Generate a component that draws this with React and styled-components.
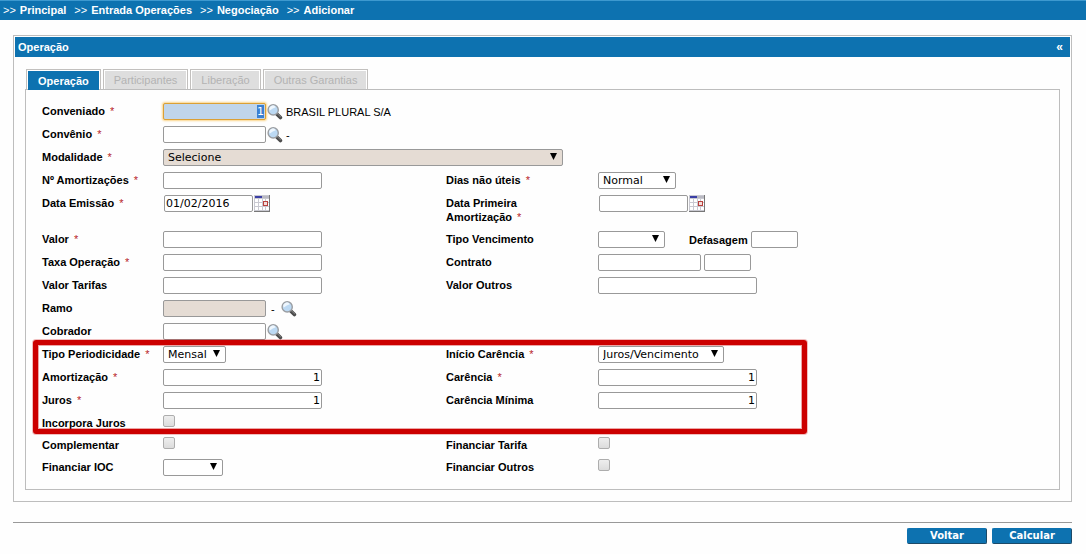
import React, { useEffect, useRef, useState } from 'react'
import styled, { createGlobalStyle } from 'styled-components'

const crumbs = ['Principal', 'Entrada Operações', 'Negociação', 'Adicionar']
const tabs = ['Operação', 'Participantes', 'Liberação', 'Outras Garantias']

const SearchIcon = () => (
  <svg width="16" height="16" viewBox="0 0 16 16" aria-hidden="true">
    <path d="M9.8 10 L13.4 13.6" stroke="#4a4a4a" strokeWidth="3.6" strokeLinecap="round" />
    <path d="M10.2 9.6 L13.6 12.8" stroke="#8a8a8a" strokeWidth="1" strokeLinecap="round" />
    <circle cx="6.2" cy="5.9" r="5.1" fill="#bcd9f3" stroke="#9a9da1" strokeWidth="1.4" />
    <path d="M2.8 6.6 A3.4 3.4 0 0 1 8.8 3.2 Q5.8 4.2 2.8 6.6Z" fill="#eef6fd" />
  </svg>
)

const CalendarIcon = () => (
  <svg width="16" height="17" viewBox="0 0 16 17" shapeRendering="crispEdges" aria-hidden="true">
    <rect width="16" height="17" fill="#777" />
    <rect x="0" y="0" width="15" height="16" fill="#c9c9d1" />
    <rect x="1" y="1" width="14" height="2" fill="#b9b9c2" />
    <rect x="1" y="1" width="7" height="2" fill="#3b3fa5" />
    <path
      d="M1 4h3v3H1zM5 4h3v3H5zM9 4h2v3H9zM12 4h3v3h-3zM1 8h3v3H1zM5 8h3v3H5zM12 8h3v3h-3zM1 12h3v3H1zM5 12h3v3H5zM9 12h2v3H9zM12 12h3v3h-3z"
      fill="#fff"
    />
    <rect x="9" y="6" width="5" height="5" fill="#b8403c" />
    <rect x="10" y="7" width="3" height="3" fill="#f3dcd9" />
  </svg>
)

const Field = ({ id, label, required, children }) => (
  <>
    <Label htmlFor={id}>
      {label}
      {required && <Required> *</Required>}
    </Label>
    <Controls>{children}</Controls>
  </>
)

const Combo = ({ id, width, options = [''], muted }) => (
  <SelectBox $width={width}>
    <Select id={id} $muted={muted}>
      {options.map((option) => (
        <option key={option}>{option}</option>
      ))}
    </Select>
    <Arrow viewBox="0 0 7 7" aria-hidden="true">
      <path d="M0 0h7L3.5 7z" />
    </Arrow>
  </SelectBox>
)

const Search = ({ name }) => (
  <IconButton type="button" aria-label={`Pesquisar ${name}`}>
    <SearchIcon />
  </IconButton>
)

const DateField = ({ id, defaultValue }) => (
  <DateBox>
    <Input id={id} $width={89} defaultValue={defaultValue} />
    <IconButton type="button" aria-label="Calendário">
      <CalendarIcon />
    </IconButton>
  </DateBox>
)

const App = () => {
  const [open, setOpen] = useState(true)
  const first = useRef(null)

  useEffect(() => {
    first.current?.focus()
    first.current?.select()
  }, [])

  return (
    <>
      <GlobalStyle />
      <Breadcrumb>
        {crumbs.map((crumb) => (
          <Crumb key={crumb}>
            &gt;&gt;<a href="#">{crumb}</a>
          </Crumb>
        ))}
      </Breadcrumb>
      <Page>
        <Panel>
          <PanelTitle>
            <h1>Operação</h1>
            <Collapse type="button" aria-label="Recolher" onClick={() => setOpen(!open)}>
              «
            </Collapse>
          </PanelTitle>
          {open && (
            <PanelBody>
              <Tabs role="tablist">
                {tabs.map((tab, i) => (
                  <Tab key={tab} type="button" role="tab" aria-selected={i === 0} disabled={i > 0}>
                    <span>{tab}</span>
                  </Tab>
                ))}
              </Tabs>
              <Form>
                <Row>
                  <Field id="conveniado" label="Conveniado" required>
                    <Input id="conveniado" ref={first} $width={103} $right defaultValue="1" />
                    <Search name="Conveniado" />
                    <Info>BRASIL PLURAL S/A</Info>
                  </Field>
                </Row>
                <Row>
                  <Field id="convenio" label="Convênio" required>
                    <Input id="convenio" $width={103} />
                    <Search name="Convênio" />
                    <Info>-</Info>
                  </Field>
                </Row>
                <Row>
                  <Field id="modalidade" label="Modalidade" required>
                    <Combo id="modalidade" width={400} options={['Selecione']} muted />
                  </Field>
                </Row>
                <Row>
                  <Field id="amortizacoes" label="Nº Amortizações" required>
                    <Input id="amortizacoes" $width={159} />
                  </Field>
                  <Field id="dias" label="Dias não úteis" required>
                    <Combo id="dias" width={78} options={['Normal']} />
                  </Field>
                </Row>
                <Row>
                  <Field id="emissao" label="Data Emissão" required>
                    <DateField id="emissao" defaultValue="01/02/2016" />
                  </Field>
                  <Field id="primeira" label="Data Primeira Amortização" required>
                    <DateField id="primeira" />
                  </Field>
                </Row>
                <Row>
                  <Field id="valor" label="Valor" required>
                    <Input id="valor" $width={159} />
                  </Field>
                  <Field id="vencimento" label="Tipo Vencimento">
                    <Combo id="vencimento" width={67} />
                    <InlineLabel htmlFor="defasagem">Defasagem</InlineLabel>
                    <Input id="defasagem" $width={47} />
                  </Field>
                </Row>
                <Row>
                  <Field id="taxa" label="Taxa Operação" required>
                    <Input id="taxa" $width={159} />
                  </Field>
                  <Field id="contrato" label="Contrato">
                    <Pair>
                      <Input id="contrato" $width={103} />
                      <Input aria-label="Contrato complemento" $width={47} />
                    </Pair>
                  </Field>
                </Row>
                <Row>
                  <Field id="tarifas" label="Valor Tarifas">
                    <Input id="tarifas" $width={159} />
                  </Field>
                  <Field id="outros" label="Valor Outros">
                    <Input id="outros" $width={159} />
                  </Field>
                </Row>
                <Row>
                  <Field id="ramo" label="Ramo">
                    <Input id="ramo" $width={103} $muted readOnly />
                    <Info $wide>-</Info>
                    <Search name="Ramo" />
                  </Field>
                </Row>
                <Row>
                  <Field id="cobrador" label="Cobrador">
                    <Input id="cobrador" $width={103} />
                    <Search name="Cobrador" />
                  </Field>
                </Row>
                <Group>
                  <Row>
                    <Field id="periodicidade" label="Tipo Periodicidade" required>
                      <Combo id="periodicidade" width={63} options={['Mensal']} />
                    </Field>
                    <Field id="inicio" label="Início Carência" required>
                      <Combo id="inicio" width={126} options={['Juros/Vencimento']} />
                    </Field>
                  </Row>
                  <Row>
                    <Field id="amortizacao" label="Amortização" required>
                      <Input id="amortizacao" $width={159} $right defaultValue="1" />
                    </Field>
                    <Field id="carencia" label="Carência" required>
                      <Input id="carencia" $width={159} $right defaultValue="1" />
                    </Field>
                  </Row>
                  <Row>
                    <Field id="juros" label="Juros" required>
                      <Input id="juros" $width={159} $right defaultValue="1" />
                    </Field>
                    <Field id="minima" label="Carência Mínima">
                      <Input id="minima" $width={159} $right defaultValue="1" />
                    </Field>
                  </Row>
                  <Row>
                    <Field id="incorpora" label="Incorpora Juros">
                      <Checkbox id="incorpora" />
                    </Field>
                  </Row>
                  <Highlight />
                </Group>
                <Row>
                  <Field id="complementar" label="Complementar">
                    <Checkbox id="complementar" />
                  </Field>
                  <Field id="finTarifa" label="Financiar Tarifa">
                    <Checkbox id="finTarifa" />
                  </Field>
                </Row>
                <Row>
                  <Field id="ioc" label="Financiar IOC">
                    <Combo id="ioc" width={60} />
                  </Field>
                  <Field id="finOutros" label="Financiar Outros">
                    <Checkbox id="finOutros" />
                  </Field>
                </Row>
              </Form>
            </PanelBody>
          )}
        </Panel>
        <Actions>
          <ActionButton type="button">Voltar</ActionButton>
          <ActionButton type="button">Calcular</ActionButton>
        </Actions>
      </Page>
    </>
  )
}

export default App

const GlobalStyle = createGlobalStyle`
  * {
    box-sizing: border-box;
  }
  body {
    margin: 0;
    background: #fefefe;
    color: #000;
    font-family: "Liberation Sans", Arial, sans-serif;
    font-size: 11px;
    line-height: 14px;
  }
  button, input, select {
    margin: 0;
    font: inherit;
  }
`

const Breadcrumb = styled.nav`
  display: flex;
  align-items: center;
  gap: 8px;
  height: 20px;
  padding: 0 3px;
  background: #0d72b0;
  box-shadow: inset 0 1px #3d99cf;
  color: #fff;
`

const Crumb = styled.span`
  display: flex;
  gap: 4px;
  a {
    color: #fff;
    font-weight: bold;
    text-decoration: none;
  }
`

const Page = styled.main`
  padding: 15px 14px 0 13px;
`

const Panel = styled.section`
  padding: 1px;
  border: 1px solid #bdbdbd;
`

const PanelTitle = styled.header`
  display: flex;
  align-items: center;
  justify-content: space-between;
  height: 20px;
  padding: 0 7px 0 3px;
  background: #0d72b0;
  color: #fff;
  h1 {
    margin: 0;
    font-size: 11px;
  }
`

const Collapse = styled.button`
  padding: 0;
  border: 0;
  background: none;
  color: #fff;
  font-size: 12px;
  font-weight: bold;
  cursor: pointer;
`

const PanelBody = styled.div`
  padding: 12px 10px 10px;
`

const Tabs = styled.div`
  display: flex;
  gap: 2px;
  padding-left: 1px;
`

const Tab = styled.button`
  height: 20px;
  padding: 1px 1px 0;
  border: 1px solid #c2c0be;
  border-bottom: 0;
  background: #fff;
  color: #b3b3b3;
  span {
    display: block;
    height: 18px;
    padding: 2px 9px;
    background: #dedede;
  }
  &[aria-selected='true'] {
    color: #fff;
    font-weight: bold;
    z-index: 1;
    span {
      height: 19px;
      padding: 3px 10px;
      background: #0d72b0;
    }
  }
`

const Form = styled.form`
  display: flex;
  flex-direction: column;
  gap: 6px;
  padding: 13px 16px;
  border: 1px solid #bdbdbd;
`

const Row = styled.div`
  display: grid;
  grid-template-columns: 121px 283px 152px 1fr;
  align-items: start;
`

const Group = styled.div`
  position: relative;
  display: flex;
  flex-direction: column;
  gap: 6px;
`

/* red frame drawn over the periodicity fields */
const Highlight = styled.div`
  position: absolute;
  top: -6px;
  bottom: -3px;
  left: -9px;
  width: 774px;
  border: 5px solid #cc0000;
  border-radius: 3px;
  box-shadow: 0 0 0 1px rgba(204, 0, 0, 0.25), inset 0 0 0 1px rgba(204, 0, 0, 0.35);
  pointer-events: none;
`

const Label = styled.label`
  padding: 1px 30px 1px 0;
  font-weight: bold;
  &:first-child {
    padding-right: 0;
  }
`

const InlineLabel = styled.label`
  width: 62px;
  margin-left: 24px;
  font-weight: bold;
`

const Required = styled.span`
  margin-left: 2px;
  color: #b8242a;
  font-weight: normal;
`

const Controls = styled.div`
  display: flex;
  align-items: center;
`

const Pair = styled.div`
  display: flex;
  gap: 3px;
`

const DateBox = styled.div`
  display: flex;
  gap: 1px;
  padding-left: 1px;
`

const Input = styled.input`
  width: ${(props) => props.$width}px;
  height: 17px;
  padding: 0 1px;
  border: 1px solid #999;
  border-radius: 2px;
  background: ${(props) => (props.$muted ? '#e5dcd4' : '#fff')};
  font-family: 'DejaVu Sans', Verdana, sans-serif;
  text-align: ${(props) => (props.$right ? 'right' : 'left')};
  &:focus {
    outline: 0;
    border-color: #dba035;
    background: #c0d5ea;
    box-shadow: 0 0 2px 1px #fbd58a;
  }
  &::selection {
    background: #3a80d2;
    color: #fff;
  }
`

const SelectBox = styled.div`
  position: relative;
  flex: none;
  width: ${(props) => props.$width}px;
  height: 17px;
`

const Select = styled.select`
  display: block;
  width: 100%;
  height: 17px;
  padding: 0 4px;
  border: 1px solid #999;
  border-radius: 2px;
  appearance: none;
  background: ${(props) => (props.$muted ? '#e5dcd4' : '#fff')};
  color: #000;
  font-family: 'DejaVu Sans', Verdana, sans-serif;
`

const Arrow = styled.svg`
  position: absolute;
  top: 4px;
  right: 6px;
  width: 7px;
  height: 7px;
  pointer-events: none;
`

const Checkbox = styled.input.attrs({ type: 'checkbox' })`
  width: 12px;
  height: 12px;
  border: 1px solid #adadad;
  border-radius: 2px;
  appearance: none;
  background: linear-gradient(#eee, #dcdcdc);
  &:checked {
    background: #0d72b0;
  }
`

const IconButton = styled.button`
  display: flex;
  padding: 0;
  border: 0;
  background: none;
  cursor: pointer;
  ${Controls} > & {
    margin-left: 1px;
  }
`

const Info = styled.span`
  margin: ${(props) => (props.$wide ? '0 5px' : '0 3px')};
  white-space: nowrap;
`

const Actions = styled.footer`
  display: flex;
  justify-content: flex-end;
  gap: 5px;
  margin-top: 20px;
  padding-top: 5px;
  border-top: 1px solid #999;
`

const ActionButton = styled.button`
  width: 80px;
  height: 16px;
  padding: 0;
  border: 1px solid #0d72b0;
  border-right-color: #1c4a68;
  border-bottom-color: #1c4a68;
  border-radius: 2px;
  background: #0d72b0;
  color: #fff;
  font-family: 'DejaVu Sans', Verdana, sans-serif;
  font-size: 10px;
  font-weight: bold;
  line-height: 14px;
  cursor: pointer;
`
